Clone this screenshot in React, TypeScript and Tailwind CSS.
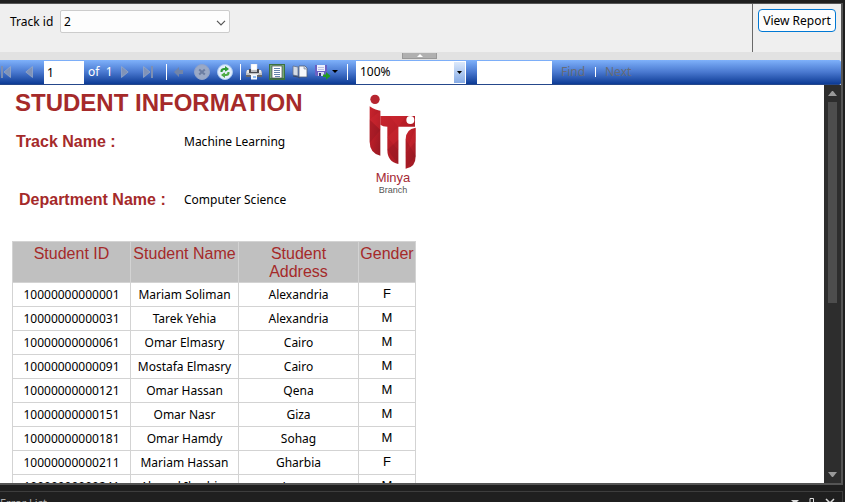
import type { ReactNode } from "react";

const students = [
  ["10000000000001", "Mariam Soliman", "Alexandria", "F"],
  ["10000000000031", "Tarek Yehia", "Alexandria", "M"],
  ["10000000000061", "Omar Elmasry", "Cairo", "M"],
  ["10000000000091", "Mostafa Elmasry", "Cairo", "M"],
  ["10000000000121", "Omar Hassan", "Qena", "M"],
  ["10000000000151", "Omar Nasr", "Giza", "M"],
  ["10000000000181", "Omar Hamdy", "Sohag", "M"],
  ["10000000000211", "Mariam Hassan", "Gharbia", "F"],
  ["10000000000241", "Ahmed Ibrahim", "Luxor", "M"],
];

function ToolButton({ label, children }: { label: string; children: ReactNode }) {
  return (
    <button type="button" aria-label={label} className="flex h-4 shrink-0 items-center">
      {children}
    </button>
  );
}

function Divider() {
  return <span className="h-4 w-px shrink-0 bg-white" />;
}

function FirstIcon() {
  return (
    <svg width="10" height="12" viewBox="0 0 10 12">
      <path d="M0 0h2v12H0z" fill="#7d8fb3" />
      <path d="M9.500 .5v11L3 6z" fill="#8093b8" stroke="#9cabc6" strokeWidth=".7" />
    </svg>
  );
}

function PrevIcon() {
  return (
    <svg width="8" height="12" viewBox="0 0 8 12">
      <path d="M7.500 .5v11L.8 6z" fill="#8093b8" stroke="#9cabc6" strokeWidth=".7" />
    </svg>
  );
}

function NextIcon() {
  return (
    <svg width="8" height="12" viewBox="0 0 8 12">
      <path d="M.5 .5v11L7.200 6z" fill="#8093b8" stroke="#9cabc6" strokeWidth=".7" />
    </svg>
  );
}

function LastIcon() {
  return (
    <svg width="10" height="12" viewBox="0 0 10 12">
      <path d="M8 0h2v12H8z" fill="#7d8fb3" />
      <path d="M.5 .5v11L7 6z" fill="#8093b8" stroke="#9cabc6" strokeWidth=".7" />
    </svg>
  );
}

function BackIcon() {
  return (
    <svg width="10" height="10" viewBox="0 0 10 10">
      <path d="M0 5l5-5v3h4v4H5v3z" fill="#7184a8" />
    </svg>
  );
}

function StopIcon() {
  return (
    <svg width="16" height="16" viewBox="0 0 16 16">
      <circle cx="8" cy="8" r="7.500" fill="#9aa9c6" stroke="#8fa2c8" />
      <path d="M5.200 5.500l5.600 5M10.800 5.500l-5.600 5" stroke="#6b7da2" strokeWidth="2" />
    </svg>
  );
}

function RefreshIcon() {
  return (
    <svg width="16" height="16" viewBox="0 0 16 16">
      <circle cx="8" cy="8" r="7.500" fill="#e3eefb" stroke="#a9c9f2" />
      <path d="M3.500 8V6.500Q4 4 7 4h1V2l4 3-4 3V6H7Q5.500 6 5.500 8z" fill="#2f9b35" />
      <path d="M12.500 8v1.500Q12 12 9 12H8v2l-4-3 4-3v2h1q1.500 0 1.500-2z" fill="#4dab45" />
      <path d="M7 7.400h2v1.200H7z" fill="#e3eefb" />
    </svg>
  );
}

function PrintIcon() {
  return (
    <svg width="16" height="16" viewBox="0 0 16 16">
      <path d="M5 0h6v6H5z" fill="#fff" stroke="#d5dae4" strokeWidth=".5" />
      <path d="M1 6h14l1 2v4H0V8z" fill="#bfc0c4" />
      <path d="M1 6h2v3H1zM13 6h2v3h-2z" fill="#e5e5e7" />
      <path d="M3 5h2v3h6V5h2v4H3z" fill="#4a4b50" />
      <path d="M0 11h16v2H0z" fill="#66676c" />
      <path d="M4 10h8v1H4z" fill="#eee" />
      <path d="M5 11h6v4.500H5z" fill="#f4f8ff" />
      <path d="M7 12h3v2H7z" fill="#8ebcf0" />
    </svg>
  );
}

function LayoutIcon() {
  return (
    <svg width="16" height="16" viewBox="0 0 16 16">
      <path d="M0 0h16v16H0z" fill="#3d7040" />
      <path d="M1 1h14v13H1z" fill="#75a773" />
      <path d="M3 2h10v12H3z" fill="#fff" stroke="#434a57" strokeWidth=".7" />
      <path d="M5 4.500h6M5 6.500h6M5 8.500h6M5 10.500h6M6 12.500h5" stroke="#6583ac" />
    </svg>
  );
}

function PageSetupIcon() {
  return (
    <svg width="16" height="14" viewBox="0 0 16 14">
      <path d="M1 1l5 1v9l-5-1z" fill="#d4dbe5" stroke="#65728a" strokeWidth=".8" />
      <path d="M1 11l5 1 2 1" stroke="#404b61" fill="none" />
      <path d="M7 1h6l2 2v9H7z" fill="#f7f8fb" stroke="#515d73" strokeWidth=".8" />
      <path d="M12 1v3h3" fill="#bdc8da" stroke="#7c899f" strokeWidth=".7" />
    </svg>
  );
}

function SaveIcon() {
  return (
    <svg width="24" height="16" viewBox="0 0 24 16">
      <path d="M0 1h12v11H1L0 11z" fill="#6a60c4" />
      <path d="M2 1h8v6H2z" fill="#edf0fc" />
      <path d="M3 3.500h6M3 5.500h6" stroke="#a5abd8" strokeWidth=".7" />
      <path d="M3 8h6v4H3z" fill="#d5dcf2" />
      <path d="M4 9h2v3H4z" fill="#373078" />
      <path d="M8 10.500h3V8l4.500 3.900-4.500 3.800V13H8z" fill="#229b23" />
      <path d="M17 6h6l-3 3z" fill="#000" />
    </svg>
  );
}

function Logo() {
  return (
    <svg width="48" height="76" viewBox="58 28 144 228" aria-label="ITI" role="img">
      <defs>
        <linearGradient id="ruby" x1="0" y1="0" x2="1" y2="1">
          <stop offset="0" stopColor="#c8242d" />
          <stop offset=".5" stopColor="#b51d27" />
          <stop offset="1" stopColor="#951923" />
        </linearGradient>
      </defs>
      <circle cx="76" cy="44" r="14" fill="#b72630" />
      <path d="M60 65q20 13 32 13v135q-32-8-32-42z" fill="url(#ruby)" />
      <path d="M92 94h104v32h-50v112q-33-7-33-43v-69q-14 0-21-6z" fill="url(#ruby)" />
      <path d="M168 252v-88q0-31 30-35v86q0 34-30 37z" fill="url(#ruby)" />
      <path d="M60 105l32-27v58zM113 158l33-32v70zM168 205l30-35v-41zM120 94l26 32 24-32z" fill="#d42b35" opacity=".35" />
      <path d="M60 105l32 31-32 38zM113 195l33-30v73zM168 164l30 50-30 38z" fill="#79131e" opacity=".25" />
      <circle cx="182" cy="106" r="12" fill="#fff" />
    </svg>
  );
}

const cell = "border border-[#d3d3d3] p-0 text-center font-normal";

export default function App() {
  return (
    <div className="flex h-screen flex-col overflow-hidden bg-[#1f1f1f] font-['Noto_Sans','Open_Sans',sans-serif] text-xs text-black">
      <div className="mt-[3px] mr-0.5 flex min-h-0 flex-1 flex-col border-t border-r-2 border-b-2 border-[#555]">
        <form className="flex h-12 shrink-0 bg-[#efefef]">
          <div className="flex flex-1 items-start pt-1.5 pl-2.5">
            <label htmlFor="track" className="w-[50px] text-xs leading-6">
              Track id
            </label>
            <div className="relative">
              <select
                id="track"
                className="block h-[23px] w-[170px] appearance-none rounded-xs border border-[#ccc] bg-[#fdfdfd] px-[3px] text-xs leading-5"
              >
                <option>2</option>
              </select>
              <svg width="10" height="6" viewBox="0 0 10 6" className="pointer-events-none absolute top-2.5 right-1">
                <path d="M1 .8l4 4 4-4" fill="none" stroke="#555" strokeWidth="1.200" />
              </svg>
            </div>
          </div>
          <div className="border-l border-[#696969] px-[5px] pt-[5px]">
            <button
              type="button"
              className="h-[23px] w-[78px] rounded border border-[#0078d4] bg-[#fdfdfd] text-xs leading-5 whitespace-nowrap"
            >
              View Report
            </button>
          </div>
        </form>

        <div className="flex h-2 shrink-0 items-start bg-[#e2e2e2] pl-[402px]">
          <button
            type="button"
            aria-label="Hide parameters"
            className="mt-px flex h-1.5 w-[35px] items-center justify-center border-x border-b border-[#999] bg-[#b0b0b0]"
          >
            <svg width="6" height="3" viewBox="0 0 6 3">
              <path d="M0 3l3-3 3 3z" fill="#fff" />
            </svg>
          </button>
        </div>

        <div className="shrink-0 bg-white">
          <div
            role="toolbar"
            className="flex h-[25px] items-center rounded-r-xs border-b border-[#25478b] bg-linear-to-b from-[#7fb1fa] via-[#4a79d0] to-[#0c3b95] pl-px text-white"
          >
            <div className="flex items-center gap-3.5">
              <ToolButton label="First page"><FirstIcon /></ToolButton>
              <ToolButton label="Previous page"><PrevIcon /></ToolButton>
            </div>
            <input
              aria-label="Current page"
              defaultValue="1"
              className="mr-1 ml-[11px] h-[23px] w-10 bg-white px-[3px] text-xs text-black"
            />
            <span className="w-[33px] whitespace-pre">of  1</span>
            <div className="flex items-center gap-3.5">
              <ToolButton label="Next page"><NextIcon /></ToolButton>
              <ToolButton label="Last page"><LastIcon /></ToolButton>
            </div>
            <div className="ml-[13px] flex items-center gap-[7px]">
              <Divider />
              <ToolButton label="Back"><BackIcon /></ToolButton>
            </div>
            <div className="ml-2.5 flex items-center gap-[7px]">
              <ToolButton label="Stop"><StopIcon /></ToolButton>
              <ToolButton label="Refresh"><RefreshIcon /></ToolButton>
              <Divider />
            </div>
            <div className="ml-[5px] flex items-center gap-[7px]">
              <ToolButton label="Print"><PrintIcon /></ToolButton>
              <ToolButton label="Print layout"><LayoutIcon /></ToolButton>
              <ToolButton label="Page setup"><PageSetupIcon /></ToolButton>
              <ToolButton label="Export"><SaveIcon /></ToolButton>
            </div>
            <div className="ml-2 flex items-center gap-2">
              <Divider />
              <div className="relative">
                <select
                  aria-label="Zoom"
                  className="block h-[23px] w-[110px] appearance-none bg-white px-1 text-xs text-black"
                >
                  <option>100%</option>
                </select>
                <span className="pointer-events-none absolute top-px right-px flex h-[21px] w-[11px] items-center justify-center bg-linear-to-b from-[#dce9fb] to-[#86abe5]">
                  <svg width="5" height="3" viewBox="0 0 5 3">
                    <path d="M0 0h5L2.500 3z" />
                  </svg>
                </span>
              </div>
            </div>
            <input aria-label="Find text" className="ml-[11px] h-[23px] w-[75px] bg-white px-1 text-xs text-black" />
            <div className="ml-[9px] flex items-center gap-[9px] text-[#666c78]">
              <button type="button" disabled className="w-[25px] text-left">Find</button>
              <span className="h-2.5 w-px bg-white" />
              <button type="button" disabled>Next</button>
            </div>
          </div>
        </div>

        <div className="flex min-h-0 flex-1 bg-white">
          <main className="min-w-0 flex-1 overflow-hidden pl-3">
            <div className="flex h-[156px]">
              <div className="w-[357px]">
                <h1 className="pt-1 pl-[3px] font-['Liberation_Sans',Arial,sans-serif] text-2xl leading-7 font-bold whitespace-nowrap text-[#a52a2a]">
                  STUDENT INFORMATION
                </h1>
                <dl className="grid grid-cols-[172px_1fr] gap-y-[34px] pt-[13px] text-xs leading-6">
                  <dt className="pl-1 font-['Liberation_Sans',Arial,sans-serif] text-base leading-6 font-bold text-[#a52a2a]">
                    Track Name :
                  </dt>
                  <dd>Machine Learning</dd>
                  <dt className="pl-[7px] font-['Liberation_Sans',Arial,sans-serif] text-base leading-6 font-bold text-[#a52a2a]">
                    Department Name :
                  </dt>
                  <dd>Computer Science</dd>
                </dl>
              </div>
              <div className="flex flex-col items-center pt-[9px] font-['Liberation_Sans',Arial,sans-serif]">
                <Logo />
                <span className="mt-px text-[13px] leading-[14px] text-[#a52a35]">Minya</span>
                <span className="text-[9px] leading-[10px] text-[#555]">Branch</span>
              </div>
            </div>

            <table className="w-[404px] table-fixed border-collapse text-xs">
              <colgroup>
                <col className="w-[118px]" />
                <col className="w-[108px]" />
                <col className="w-[120px]" />
                <col className="w-[57px]" />
              </colgroup>
              <thead>
                <tr className="h-[41px] bg-[#c0c0c0] align-top font-['Liberation_Sans',Arial,sans-serif] text-base leading-[18px] text-[#a52a2a]">
                  <th className={`${cell} pt-[3px]`}>Student ID</th>
                  <th className={`${cell} pt-[3px] whitespace-nowrap`}>Student Name</th>
                  <th className={`${cell} pt-[3px]`}>Student<br />Address</th>
                  <th className={`${cell} pt-[3px]`}>Gender</th>
                </tr>
              </thead>
              <tbody>
                {students.map(([id, name, address, gender]) => (
                  <tr key={id} className="h-6">
                    <td className={cell}>{id}</td>
                    <td className={`${cell} whitespace-nowrap`}>{name}</td>
                    <td className={cell}>{address}</td>
                    <td className={`${cell} align-top font-['Liberation_Sans',Arial,sans-serif] text-[13px] leading-[21px]`}>
                      {gender}
                    </td>
                  </tr>
                ))}
              </tbody>
            </table>
          </main>

          <div className="flex w-[17px] shrink-0 flex-col items-center bg-[#2d2d2d] py-1.5">
            <svg width="9" height="5" viewBox="0 0 9 5">
              <path d="M0 5l4-5h1l4 5z" fill="#999" />
            </svg>
            <div className="mt-1.5 h-[52%] w-[9px] bg-[#4d4d4d]" />
            <svg width="9" height="5" viewBox="0 0 9 5" className="mt-auto">
              <path d="M0 0l4 5h1l4-5z" fill="#999" />
            </svg>
          </div>
        </div>
      </div>

      <footer className="mt-1.5 mr-0.5 flex h-[11px] shrink-0 items-start justify-between overflow-hidden border-t border-r border-[#3d3d3d] pr-[7px]">
        <span className="pt-0.5 text-[11px] leading-[18px] text-[#aaa]">Error List</span>
        <div className="flex gap-2.5 pt-1.5">
          <button type="button" aria-label="Window options">
            <svg width="8" height="10" viewBox="0 0 8 10">
              <path d="M0 2h8L4 6z" fill="#ddd" />
            </svg>
          </button>
          <button type="button" aria-label="Pin">
            <svg width="6" height="10" viewBox="0 0 6 10">
              <path d="M1 9V.5h3.500V9M0 8.500h6" fill="none" stroke="#ddd" />
            </svg>
          </button>
          <button type="button" aria-label="Close">
            <svg width="10" height="10" viewBox="0 0 10 10">
              <path d="M1 1l8 8M9 1L1 9" stroke="#ddd" strokeWidth="1.500" />
            </svg>
          </button>
        </div>
      </footer>
    </div>
  );
}
